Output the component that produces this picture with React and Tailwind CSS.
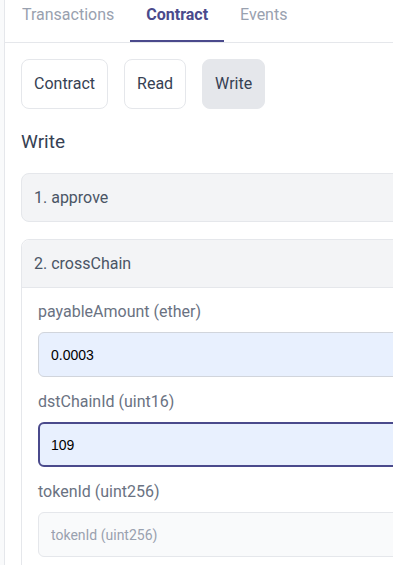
import React, { useState } from 'react';

const tabs = ['Transactions', 'Contract', 'Events'];
const modes = ['Contract', 'Read', 'Write'];

function Field({ label, value, placeholder, focused }) {
  return (
    <div className="mb-[13px]">
      <label className="block text-base leading-6 text-gray-500 mb-2">{label}</label>
      <input
        defaultValue={value}
        placeholder={placeholder}
        className={
          'block w-[400px] h-[45px] px-3 rounded-md outline-none text-[14px] text-black placeholder:text-gray-400 ' +
          (focused
            ? 'border-2 border-[#4a4a8c] bg-[#e8f0fe] px-[11px]'
            : value
            ? 'border border-gray-300 bg-[#e8f0fe]'
            : 'border border-gray-200 bg-gray-50')
        }
        style={{ fontFamily: value ? '"Liberation Sans", Arial, sans-serif' : 'Roboto, sans-serif' }}
      />
    </div>
  );
}

export default function App() {
  const [tab] = useState('Contract');
  const [mode] = useState('Write');

  return (
    <div className="h-[565px] overflow-hidden bg-gray-50 font-[Roboto]">
      <div className="ml-1 h-full bg-white border-l border-gray-200 overflow-hidden">
        {/* tabs */}
        <div className="flex border-b border-gray-200 pl-[1px]">
          {tabs.map((t) => (
            <div
              key={t}
              className={
                'px-4 pt-[3px] pb-[13px] text-base leading-6 border-b-2 ' +
                (t === tab ? 'font-bold text-[#4a4a8c] border-[#4a4a8c]' : 'text-gray-400 border-transparent')
              }
            >
              {t}
            </div>
          ))}
        </div>

        <div className="pl-4 pt-4">
          {/* mode buttons */}
          <div className="flex gap-4">
            {modes.map((m) => (
              <div
                key={m}
                className={
                  'px-3 py-3 text-base leading-6 text-gray-700 rounded-lg border ' +
                  (m === mode ? 'bg-gray-200 border-gray-200' : 'bg-white border-gray-200')
                }
              >
                {m}
              </div>
            ))}
          </div>

          <h2 className="mt-[19px] text-[19px] leading-7 text-gray-700">Write</h2>

          {/* accordion */}
          <div className="mt-[17px] w-[420px]">
            <div className="h-[49px] flex items-center px-3 bg-gray-100 border border-gray-200 rounded-lg text-base text-gray-600">
              1. approve
            </div>

            <div className="mt-[17px] border border-gray-200 rounded-t-lg">
              <div className="h-[48px] flex items-center px-3 bg-gray-100 border-b border-gray-200 rounded-t-lg text-base text-gray-600">
                2. crossChain
              </div>
              <div className="pl-4 pt-3">
                <Field label="payableAmount (ether)" value="0.0003" />
                <Field label="dstChainId (uint16)" value="109" focused />
                <Field label="tokenId (uint256)" placeholder="tokenId (uint256)" />
              </div>
            </div>
          </div>
        </div>
      </div>
    </div>
  );
}
